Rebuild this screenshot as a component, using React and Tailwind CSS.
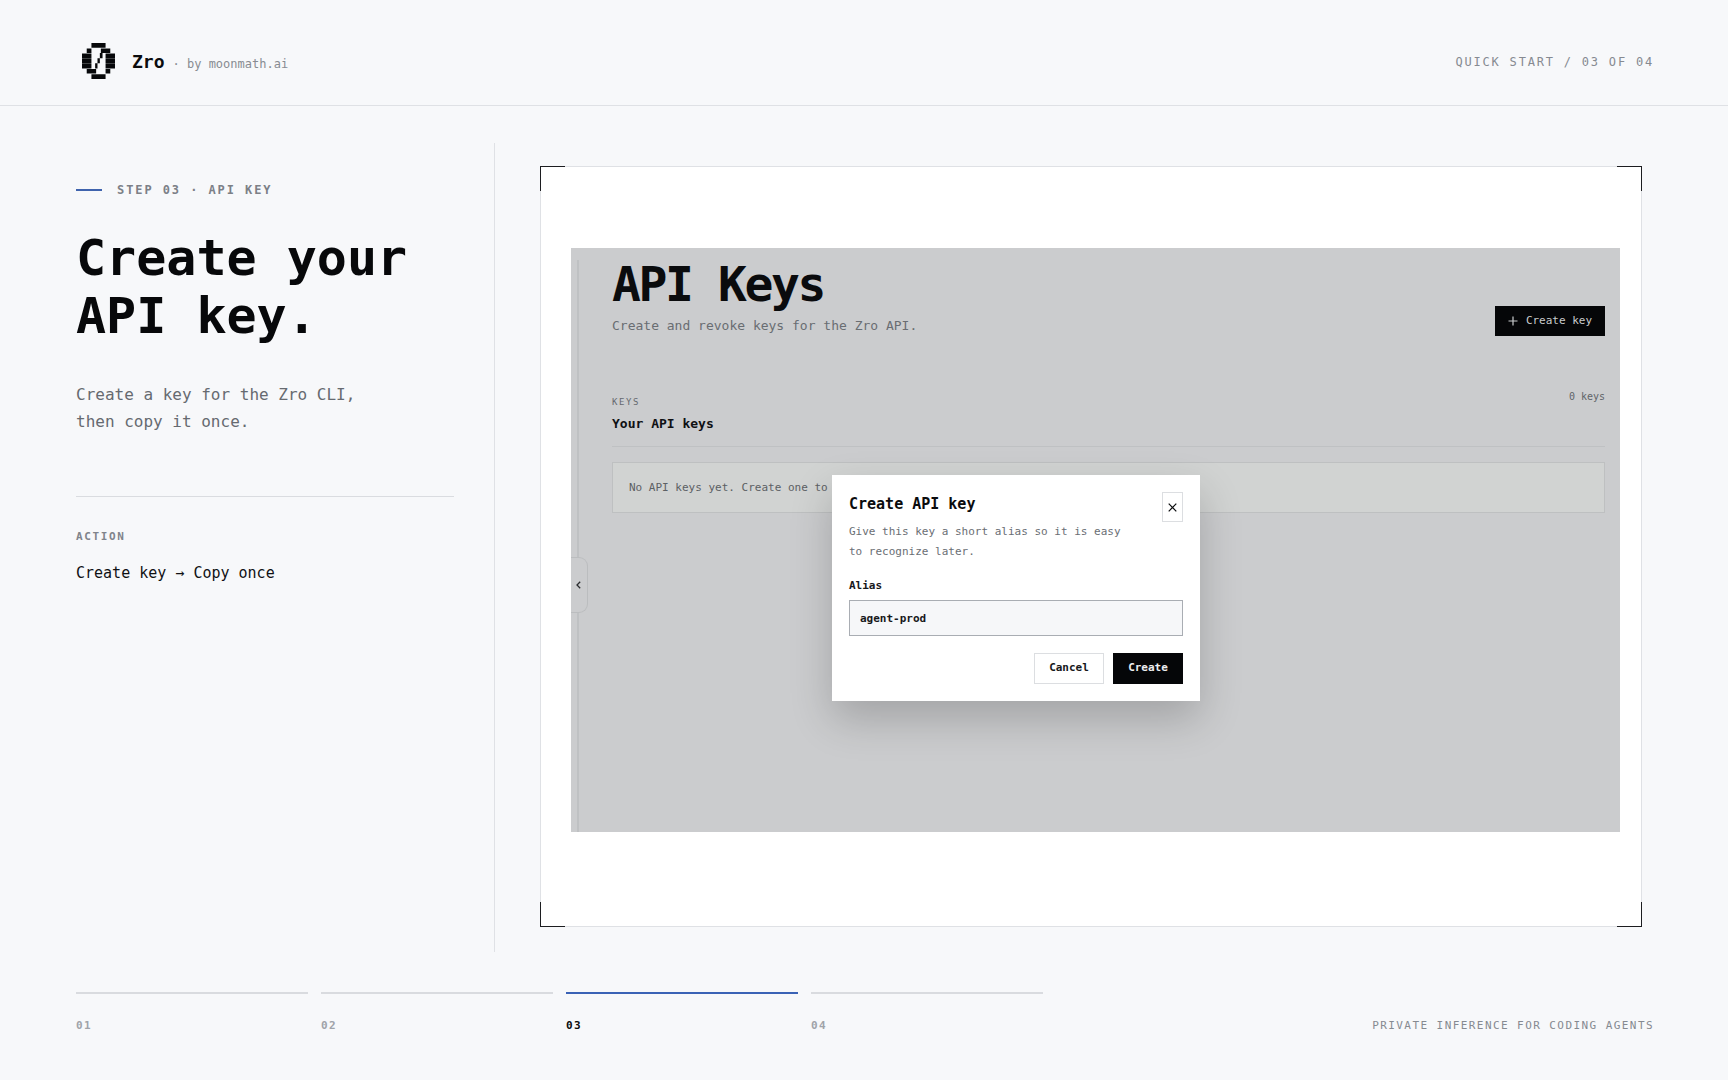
import React from "react";

const steps = ["01", "02", "03", "04"];
const currentStep = "03";

function Logo() {
  return (
    <svg width="33" height="36" viewBox="0 0 98 107" fill="#07080a" aria-hidden="true">
      <path d="M28 0h42v14H28zM14 16h14v14H14zM56 16h28v14H56zM0 31h28v14H0zM70 31h28v14H70zM0 46h28v14H0zM70 46h28v14H70zM0 61h28v15H0zM70 61h28v15H70zM14 77h28v14H14zM70 77h14v14H70zM28 93h42v14H28z" />
      <path d="M53 30h8v15h-8zM46 45h7v15h-7zM39 60h7v16h-7z" />
    </svg>
  );
}

function Corners() {
  return (
    <div aria-hidden="true">
      <span className="absolute -left-px -top-px h-[25px] w-[25px] border-l border-t border-[#1c1d20]" />
      <span className="absolute -right-px -top-px h-[25px] w-[25px] border-r border-t border-[#1c1d20]" />
      <span className="absolute -bottom-px -left-px h-[25px] w-[25px] border-b border-l border-[#1c1d20]" />
      <span className="absolute -bottom-px -right-px h-[25px] w-[25px] border-b border-r border-[#1c1d20]" />
    </div>
  );
}

function CreateKeyDialog() {
  return (
    <form
      role="dialog"
      aria-labelledby="dialog-title"
      onSubmit={(e) => e.preventDefault()}
      className="absolute left-[261px] top-[227px] w-[368px] bg-white px-[17px] pb-[17px] pt-[17px] shadow-[0_18px_40px_rgba(0,0,0,0.2)]"
    >
      <div className="flex items-start justify-between">
        <div>
          <h3 id="dialog-title" className="text-[15px] font-bold leading-6 text-[#0b0c0e]">
            Create API key
          </h3>
          <p className="mt-[6px] text-[11px] leading-5 text-[#6a6e74]">
            Give this key a short alias so it is easy
            <br />
            to recognize later.
          </p>
        </div>
        <button
          type="button"
          aria-label="Close"
          className="flex h-[30px] w-[21px] items-center justify-center border border-[#dcdee1] bg-white text-[#0b0c0e]"
        >
          <svg width="9" height="9" viewBox="0 0 9 9" stroke="currentColor" strokeWidth="1.2" fill="none">
            <path d="M.7.7l7.6 7.6M8.3.7L.7 8.3" />
          </svg>
        </button>
      </div>
      <label htmlFor="alias" className="mt-4 block text-[11px] font-bold leading-4 text-[#17181b]">
        Alias
      </label>
      <input
        id="alias"
        type="text"
        defaultValue="agent-prod"
        className="mt-[6px] block h-9 w-full border border-[#a9adb3] bg-[#f6f7f9] px-[10px] text-[11px] font-bold text-[#17181b] outline-none"
      />
      <div className="mt-[17px] flex justify-end gap-[9px]">
        <button type="button" className="h-[31px] w-[70px] border border-[#dcdee1] bg-white text-[11px] font-bold text-[#17181b]">
          Cancel
        </button>
        <button type="submit" className="h-[31px] w-[70px] bg-[#050608] text-[11px] font-bold text-[#eceef0]">
          Create
        </button>
      </div>
    </form>
  );
}

function KeysPanel() {
  return (
    <section className="relative flex min-h-[584px] bg-[#cbccce]">
      <div className="mt-3 w-2 shrink-0 border-r-2 border-[#bfc1c3]" />
      <button
        type="button"
        aria-label="Collapse sidebar"
        className="absolute left-0 top-[309px] flex h-[56px] w-[17px] items-center justify-start rounded-r-[9px] border border-l-0 border-[#bbbdbf] bg-[#cbccce] pl-[5px] text-[#2a2c2f]"
      >
        <svg width="5" height="8" viewBox="0 0 5 8" stroke="currentColor" strokeWidth="1.3" fill="none">
          <path d="M4.2.8L1 4l3.2 3.2" />
        </svg>
      </button>
      <div className="min-w-0 flex-1 pl-[33px] pr-[15px]">
        <div className="flex items-start justify-between">
          <div>
            <h2 className="pt-2 text-5xl font-bold leading-[56px] tracking-tighter text-[#0a0b0d]">API Keys</h2>
            <p className="mt-1 text-[13px] leading-5 text-[#696d72]">Create and revoke keys for the Zro API.</p>
          </div>
          <button
            type="button"
            className="mt-[58px] flex h-[30px] w-[110px] items-center justify-center gap-2 bg-[#050608] text-[11px] text-[#c9cbcd]"
          >
            <svg width="10" height="10" viewBox="0 0 10 10" stroke="currentColor" strokeWidth="1.2" fill="none">
              <path d="M5 .5v9M.5 5h9" />
            </svg>
            Create key
          </button>
        </div>
        <div className="mt-[50px] flex items-start justify-between border-b border-[#bfc1c3] pb-3">
          <div className="pt-2">
            <p className="text-[9px] leading-4 tracking-[0.18em] text-[#65696e]">KEYS</p>
            <h3 className="mt-1 text-[13px] font-bold leading-5 text-[#101114]">Your API keys</h3>
          </div>
          <span className="pt-[3px] text-[10px] leading-4 text-[#606469]">0 keys</span>
        </div>
        <p className="mt-[15px] border border-[#bec0c1] bg-[#d1d3d2] px-4 py-[14px] text-[11px] leading-[21px] text-[#5c6064]">
          No API keys yet. Create one to
        </p>
      </div>
      <CreateKeyDialog />
    </section>
  );
}

export default function App() {
  return (
    <div className="flex min-h-screen flex-col bg-[#f7f8fa] font-['DejaVu_Sans_Mono',monospace] text-[#0b0c0e]">
      <header className="flex h-[106px] items-center justify-between border-b border-[#dfe1e5] pl-[82px] pr-[74px] pt-4">
        <div className="flex items-center">
          <Logo />
          <p className="ml-[17px] flex items-baseline gap-2 pt-[2px]">
            <span className="text-lg font-bold">Zro</span>
            <span className="text-xs text-[#888c92]">· by moonmath.ai</span>
          </p>
        </div>
        <p className="pt-[2px] text-xs tracking-[0.15em] text-[#868a91]">QUICK START / 03 OF 04</p>
      </header>

      <main className="grid flex-1 grid-cols-[419px_1fr] pl-[76px] pr-[86px] pt-[37px]">
        <aside className="border-r border-[#dfe1e5] pr-[40px]">
          <p className="mt-[39px] flex items-center text-xs font-bold leading-4 tracking-[0.16em] text-[#7c8087]">
            <span className="mr-[15px] h-[2px] w-[26px] bg-[#3f63ad]" />
            STEP 03 · API KEY
          </p>
          <h1 className="mt-[31px] text-[50px] font-bold leading-[58px] text-[#07080a]">
            Create your
            <br />
            API key.
          </h1>
          <p className="mt-9 text-base leading-[27px] text-[#666a70]">
            Create a key for the Zro CLI,
            <br />
            then copy it once.
          </p>
          <div className="mt-[61px] border-t border-[#dadce0] pt-8">
            <h2 className="text-[11px] font-bold leading-4 tracking-[0.15em] text-[#80848b]">ACTION</h2>
            <p className="mt-4 text-[15px] leading-6 text-[#101114]">Create key → Copy once</p>
          </div>
        </aside>
        <div className="flex pb-[25px] pl-[45px] pt-[23px]">
          <figure className="relative min-w-0 flex-1 border border-[#dfe1e5] bg-white pb-[94px] pl-[30px] pr-[21px] pt-[81px]">
            <Corners />
            <KeysPanel />
          </figure>
        </div>
      </main>

      <footer className="flex h-[128px] items-start justify-between gap-6 pl-[76px] pr-[74px] pt-10">
        <ol className="flex gap-[13px]">
          {steps.map((step) => (
            <li
              key={step}
              className={
                step === currentStep
                  ? "w-[232px] border-t-2 border-[#3a62b5] pt-6 text-[11px] font-bold leading-4 tracking-[0.12em] text-[#0b0c0e]"
                  : "w-[232px] border-t-2 border-[#d9dbdf] pt-6 text-[11px] font-bold leading-4 tracking-[0.12em] text-[#a0a3a9]"
              }
            >
              {step}
            </li>
          ))}
        </ol>
        <p className="pt-[26px] text-[11px] leading-4 tracking-[0.13em] text-[#868a91]">PRIVATE INFERENCE FOR CODING AGENTS</p>
      </footer>
    </div>
  );
}
